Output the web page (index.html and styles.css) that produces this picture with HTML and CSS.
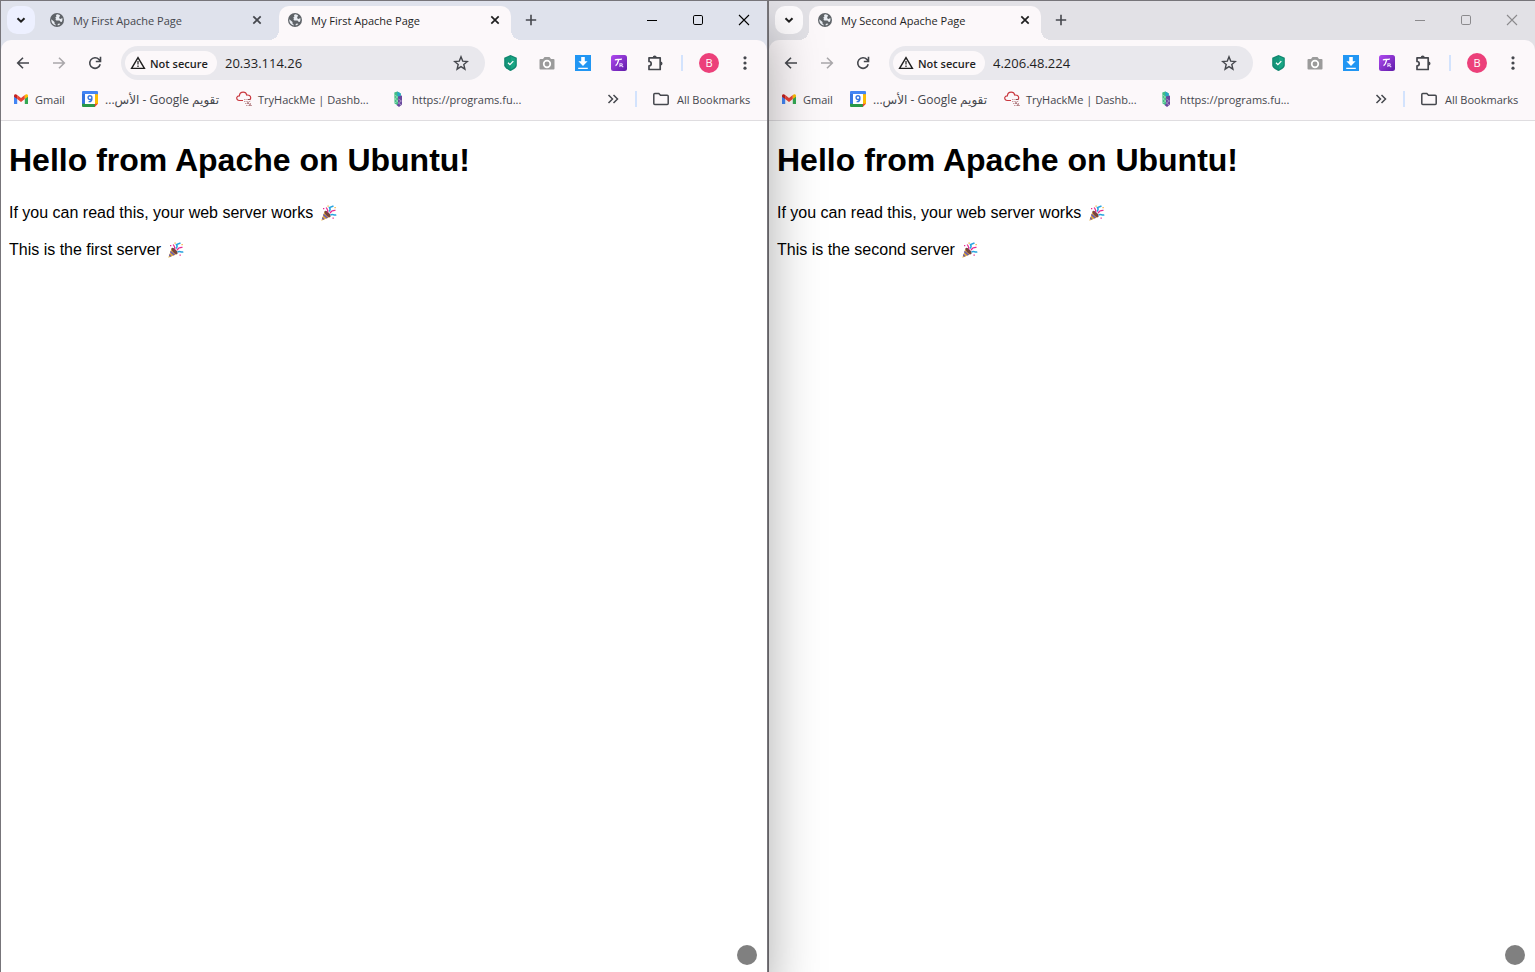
FILE: index.html
```html
<!DOCTYPE html>
<html lang="en">
<head>
<meta charset="utf-8">
<title>Apache servers side by side</title>
<link rel="stylesheet" href="styles.css">
</head>
<body>
<svg class="sprite" aria-hidden="true">
  <defs>
    <linearGradient id="violet" x1="0" y1="0" x2="1" y2="1"><stop offset="0" stop-color="#b04af0"/><stop offset="1" stop-color="#5f1ba8"/></linearGradient>
  </defs>
  <symbol id="chevron" viewBox="0 0 16 16"><path d="M4.500 6.200 8 9.700l3.500-3.500" fill="none" stroke="currentColor" stroke-width="2"/></symbol>
  <symbol id="globe" viewBox="0 0 16 16"><circle cx="8" cy="8" r="7" fill="#5f6368"/><path d="M2.300 7.200 5.500 10v1.600l1.700 1.600c-3 0-5.200-2.600-4.900-6zM8.500 2.300C7 2.500 6.600 4 7.600 4.500 6.200 5.300 6 6 7.200 6.600c-1 .5-.8 1.700.2 1.800h2.800c1 .2 1.200 1.700 2.400 1.700.8-1 1.100-2.600.7-4-.9.800-2.200 1.200-3 .2-.6-.9.500-1.700.8-2.700-.6-.8-1.500-1.200-2.600-1.300zM8.700 13.500c1-.3 2-.8 2.700-1.500-.7-.8-2-.7-2.700.1z" fill="#e9ecf2"/></symbol>
  <symbol id="close" viewBox="0 0 16 16"><path d="m4.300 4.300 7.400 7.400m0-7.400-7.400 7.400" fill="none" stroke="currentColor" stroke-width="1.700"/></symbol>
  <symbol id="plus" viewBox="0 0 16 16"><path d="M8 2.800v10.400M2.800 8h10.400" fill="none" stroke="currentColor" stroke-width="1.600"/></symbol>
  <symbol id="win-min" viewBox="0 0 16 16"><path d="M3 8.500h10" fill="none" stroke="currentColor"/></symbol>
  <symbol id="win-max" viewBox="0 0 16 16"><rect x="3.500" y="3.500" width="9" height="9" rx="1.300" fill="none" stroke="currentColor"/></symbol>
  <symbol id="win-close" viewBox="0 0 16 16"><path d="m3 3 10 10M13 3 3 13" fill="none" stroke="currentColor" stroke-width="1.100"/></symbol>
  <symbol id="back" viewBox="0 0 16 16"><path d="M14 8H3M8 2.700 2.700 8 8 13.300" fill="none" stroke="currentColor" stroke-width="1.600"/></symbol>
  <symbol id="forward" viewBox="0 0 16 16"><path d="M2 8h11M8 2.700 13.300 8 8 13.300" fill="none" stroke="currentColor" stroke-width="1.600"/></symbol>
  <symbol id="reload" viewBox="0 0 16 16"><path d="M13.200 9.300A5.300 5.300 0 1 1 12 4.500l1.300 1.500M13.500 1.800v4.700H8.800" fill="none" stroke="currentColor" stroke-width="1.600"/></symbol>
  <symbol id="warning" viewBox="0 0 16 16"><path d="M8 2.600 1.600 13.400h12.800z" fill="none" stroke="currentColor" stroke-width="1.400"/><path d="M8 6v3.600m0 1v1.300" fill="none" stroke="currentColor" stroke-width="1.200"/></symbol>
  <symbol id="star" viewBox="0 0 16 16"><path d="m8 1.800 1.700 4.300 4.700.4-3.600 3 1.100 4.600L8 11.600l-3.900 2.500 1.100-4.600-3.600-3 4.700-.4z" fill="none" stroke="currentColor" stroke-width="1.400"/></symbol>
  <symbol id="shield" viewBox="0 0 16 16"><path d="m7.500 0 6.300 2.700v7.500c0 2.300-3.200 4.300-6.300 5.800-3.100-1.500-6.300-3.500-6.300-5.800V2.700z" fill="#10866f"/><path d="m7.500 1.300 5 2.200v6.400c0 1.600-2.500 3.300-5 4.600z" fill="#18a583"/><path d="m7.500 1.300-5 2.200v6.400c0 1.600 2.500 3.300 5 4.600z" fill="#14967a"/><path d="m5 7.700 1.900 1.900 3.400-3.500" fill="none" stroke="#fff" stroke-width="1.300"/></symbol>
  <symbol id="camera" viewBox="0 0 16 16"><path d="M1.500 4H4l1.500-2h5L12 4h2.500q1 0 1 1v8.500q0 1-1 1h-13q-1 0-1-1V5q0-1 1-1z" fill="#9b9b9b"/><circle cx="8" cy="9" r="3.300" fill="none" stroke="#fff" stroke-width="1.700"/></symbol>
  <symbol id="download" viewBox="0 0 16 16"><path d="M0 0h16v16H0z" fill="#2196f3"/><path d="M6.200 2h3.600v4.300h2.800L8 11 3.400 6.300h2.800zM3.200 12.700h9.600v1.400H3.200z" fill="#fff"/></symbol>
  <symbol id="tr" viewBox="0 0 16 16"><rect width="16" height="16" rx="2.500" fill="url(#violet)"/><path d="M4 5.300c.5-1.300 2-.8 5.500-1l1.300-.3M7.700 4.700C7 7 6.400 10 4.500 10.700" fill="none" stroke="#fff" stroke-width="1.300"/><path d="M8.900 12V8.700h1.800q1.300 1-.1 1.800H9m1.500.2 1.800 1.400" fill="none" stroke="#e7d2fa" stroke-width="1.100"/></symbol>
  <symbol id="puzzle" viewBox="0 0 18 18"><path d="M3 3.800h11.200V15.500H3v-3.600a2.200 2.200 0 0 0 0-4.400z" fill="none" stroke="currentColor" stroke-width="1.700" stroke-linejoin="round"/><path d="M6.700 3.500a2 2 0 0 1 4 0zM14.500 7.600a2 2 0 0 1 0 4z" fill="currentColor"/></symbol>
  <symbol id="dots" viewBox="0 0 16 16"><g fill="currentColor"><circle cx="8" cy="2.800" r="1.600"/><circle cx="8" cy="8" r="1.600"/><circle cx="8" cy="13.200" r="1.600"/></g></symbol>
  <symbol id="gmail" viewBox="0 0 16 16"><path d="M1 4.500v8.600h3.200V6.900z" fill="#4285f4"/><path d="M15 4.500v8.600h-3.200V6.900z" fill="#34a853"/><path d="M4.200 4 8 6.900 11.800 4v4.100L8 11 4.200 8.100z" fill="#ea4335"/><path d="M11.800 4c1.400-1.300 3.200-.9 3.200.9v.8l-3.200 2.400z" fill="#fbbc04"/><path d="M4.200 4C2.800 2.700 1 3.100 1 4.900v.8l3.200 2.400z" fill="#c5221f"/></symbol>
  <symbol id="calendar" viewBox="0 0 16 16"><path d="M0 1q0-1 1-1h14q1 0 1 1v3H0z" fill="#4285f4"/><path d="M0 3h3v10H0z" fill="#3474e0"/><path d="M12.800 3.200H16V13h-3.200z" fill="#fbbc04"/><path d="M0 12.800h13V16H1q-1 0-1-1z" fill="#299947"/><path d="M12.800 12.800H16L12.800 16z" fill="#ea4335"/><path d="M3 3h10v10H3z" fill="#fff"/><path d="M9.900 6.700a1.900 1.900 0 1 1-3.800-.1 1.900 1.900 0 0 1 3.800 0c.2 2.700-.8 4.400-3.300 4" fill="none" stroke="#3474e0" stroke-width="1.400"/></symbol>
  <symbol id="cloud" viewBox="0 0 16 16"><path d="M7 9.500H3.500C1.300 9.500.2 7.500 1 6c.5-1 1.500-1.300 2.400-1.200C3.600 2.700 5.200 1.200 7.200 1.200c1.900 0 3.200 1.200 3.600 2.900 2-.4 3.900.8 3.900 2.700 0 .8-.3 1.500-.9 2" fill="none" stroke="#c9383f" stroke-width="1.200"/><g fill="none" stroke="#c99a9e" stroke-dasharray="1.500 .8"><path d="M8 8.500h4M8 10.500h7M9 12.500h6M10 14.500h6"/></g><path d="M12 8.500h2M11 12h2m0 2h2" stroke="#8b4b50" fill="none"/></symbol>
  <symbol id="dna" viewBox="0 0 16 16"><path d="m4.300 1.500 3-1 3.300 1.700v5L8 8v6.500l-3.500-2z" fill="#42bd85"/><path d="m7.300.5 3.500 1.900v4.200L7.300 5z" fill="#28a7c5"/><path d="m8 5.500 4-1v9L9 16l-2.500-2 1.500-1z" fill="#68489d"/><path d="m4.500 4 3.200 2-3.200 2 3.500 2-3.200 2" fill="none" stroke="#a4e3c1" stroke-width=".8"/><path d="m8.300 8 3.200 2-3.200 2 3 2" fill="none" stroke="#b7a2ce" stroke-width=".8"/></symbol>
  <symbol id="more" viewBox="0 0 16 16"><path d="m3.500 4 4 4-4 4m5-8 4 4-4 4" fill="none" stroke="currentColor" stroke-width="1.500"/></symbol>
  <symbol id="folder" viewBox="0 0 16 16"><path d="M.8 3.500q0-1 1-1h4L7.500 4.300h6.700q1 0 1 1v7.200q0 1-1 1H1.800q-1 0-1-1z" fill="none" stroke="currentColor" stroke-width="1.500"/></symbol>
  <symbol id="party" viewBox="0 0 16 16"><path d="M4 6.500 9.500 12 .8 15.700z" fill="#e0ac3d"/><path d="m3.200 8.700 4.500 4-1.700.7-3.500-3.200zM2 12l2 2.200-1.400.6-1.200-1.200z" fill="#6a5aad"/><ellipse cx="7" cy="9" rx="1.700" ry="4" transform="rotate(-43 7 9)" fill="#74443e"/><path d="M7 7.300C8 5 6.500 4 5.700 2.500M9.500 8.200c1-2 2.500-3 5.500-2.800" fill="none" stroke="#e62b91" stroke-width="1.300"/><path d="M8.500 6.500C9.500 5.500 10 4 9 2.500L13 1M10 10c2-1.300 3.200.5 5.800 0" fill="none" stroke="#28a4df" stroke-width="1.500"/><path d="M2.500 3h1.300v1.300H2.500zM12 12.500h1.300v1.300H12z" fill="#e62b91"/><path d="M7 .6h1.200v1.200H7zM14 2h1.200v1.200H14z" fill="#f0ae2e"/></symbol>
</svg>

<main class="desktop">
  <section class="window window-front" aria-label="First server">
    <header class="tabstrip">
      <button class="tab-search" aria-label="Search tabs"><svg class="icon"><use href="#chevron"/></svg></button>
      <div class="tab"><svg class="icon"><use href="#globe"/></svg><span class="tab-title">My First Apache Page</span><button class="tab-close" aria-label="Close tab"><svg class="icon"><use href="#close"/></svg></button></div>
      <div class="tab tab-active"><svg class="icon"><use href="#globe"/></svg><span class="tab-title">My First Apache Page</span><button class="tab-close" aria-label="Close tab"><svg class="icon"><use href="#close"/></svg></button></div>
      <button class="new-tab" aria-label="New tab"><svg class="icon"><use href="#plus"/></svg></button>
      <div class="controls">
        <button aria-label="Minimize"><svg class="icon"><use href="#win-min"/></svg></button>
        <button aria-label="Maximize"><svg class="icon"><use href="#win-max"/></svg></button>
        <button aria-label="Close"><svg class="icon"><use href="#win-close"/></svg></button>
      </div>
    </header>
    <div class="chrome">
      <div class="toolbar">
        <button class="tool" aria-label="Back"><svg class="icon"><use href="#back"/></svg></button>
        <button class="tool" aria-label="Forward" disabled><svg class="icon"><use href="#forward"/></svg></button>
        <button class="tool" aria-label="Reload"><svg class="icon"><use href="#reload"/></svg></button>
        <div class="address">
          <button class="security"><svg class="icon"><use href="#warning"/></svg>Not secure</button>
          <input class="url" type="text" aria-label="Address" value="20.33.114.26">
          <button class="tool" aria-label="Bookmark this tab"><svg class="icon"><use href="#star"/></svg></button>
        </div>
        <button class="tool" aria-label="Shield"><svg class="icon"><use href="#shield"/></svg></button>
        <button class="tool" aria-label="Screenshot"><svg class="icon"><use href="#camera"/></svg></button>
        <button class="tool" aria-label="Download"><svg class="icon"><use href="#download"/></svg></button>
        <button class="tool" aria-label="Translate"><svg class="icon"><use href="#tr"/></svg></button>
        <button class="tool" aria-label="Extensions"><svg class="icon icon-large"><use href="#puzzle"/></svg></button>
        <span class="divider"></span>
        <button class="tool" aria-label="Profile"><span class="avatar">B</span></button>
        <button class="tool" aria-label="Menu"><svg class="icon"><use href="#dots"/></svg></button>
      </div>
      <nav class="bookmarks" aria-label="Bookmarks">
        <a href="#"><svg class="icon"><use href="#gmail"/></svg><span class="label-short">Gmail</span></a>
        <a href="#"><svg class="icon"><use href="#calendar"/></svg><span class="label-rtl" dir="rtl">تقويم Google - الأس...</span></a>
        <a href="#"><svg class="icon"><use href="#cloud"/></svg><span class="label-wide">TryHackMe | Dashb...</span></a>
        <a href="#"><svg class="icon"><use href="#dna"/></svg><span class="label-wide">https://programs.fu...</span></a>
        <button class="overflow" aria-label="More bookmarks"><svg class="icon"><use href="#more"/></svg></button>
        <span class="divider"></span>
        <button class="all"><svg class="icon"><use href="#folder"/></svg>All Bookmarks</button>
      </nav>
    </div>
    <article class="page">
      <h1>Hello from Apache on Ubuntu!</h1>
      <p>If you can read this, your web server works <svg class="emoji" role="img" aria-label="Party popper"><use href="#party"/></svg></p>
      <p>This is the first server <svg class="emoji" role="img" aria-label="Party popper"><use href="#party"/></svg></p>
    </article>
    <span class="dot"></span>
  </section>

  <section class="window window-back" aria-label="Second server">
    <header class="tabstrip">
      <button class="tab-search" aria-label="Search tabs"><svg class="icon"><use href="#chevron"/></svg></button>
      <div class="tab tab-active"><svg class="icon"><use href="#globe"/></svg><span class="tab-title">My Second Apache Page</span><button class="tab-close" aria-label="Close tab"><svg class="icon"><use href="#close"/></svg></button></div>
      <button class="new-tab" aria-label="New tab"><svg class="icon"><use href="#plus"/></svg></button>
      <div class="controls">
        <button aria-label="Minimize"><svg class="icon"><use href="#win-min"/></svg></button>
        <button aria-label="Maximize"><svg class="icon"><use href="#win-max"/></svg></button>
        <button aria-label="Close"><svg class="icon"><use href="#win-close"/></svg></button>
      </div>
    </header>
    <div class="chrome">
      <div class="toolbar">
        <button class="tool" aria-label="Back"><svg class="icon"><use href="#back"/></svg></button>
        <button class="tool" aria-label="Forward" disabled><svg class="icon"><use href="#forward"/></svg></button>
        <button class="tool" aria-label="Reload"><svg class="icon"><use href="#reload"/></svg></button>
        <div class="address">
          <button class="security"><svg class="icon"><use href="#warning"/></svg>Not secure</button>
          <input class="url" type="text" aria-label="Address" value="4.206.48.224">
          <button class="tool" aria-label="Bookmark this tab"><svg class="icon"><use href="#star"/></svg></button>
        </div>
        <button class="tool" aria-label="Shield"><svg class="icon"><use href="#shield"/></svg></button>
        <button class="tool" aria-label="Screenshot"><svg class="icon"><use href="#camera"/></svg></button>
        <button class="tool" aria-label="Download"><svg class="icon"><use href="#download"/></svg></button>
        <button class="tool" aria-label="Translate"><svg class="icon"><use href="#tr"/></svg></button>
        <button class="tool" aria-label="Extensions"><svg class="icon icon-large"><use href="#puzzle"/></svg></button>
        <span class="divider"></span>
        <button class="tool" aria-label="Profile"><span class="avatar">B</span></button>
        <button class="tool" aria-label="Menu"><svg class="icon"><use href="#dots"/></svg></button>
      </div>
      <nav class="bookmarks" aria-label="Bookmarks">
        <a href="#"><svg class="icon"><use href="#gmail"/></svg><span class="label-short">Gmail</span></a>
        <a href="#"><svg class="icon"><use href="#calendar"/></svg><span class="label-rtl" dir="rtl">تقويم Google - الأس...</span></a>
        <a href="#"><svg class="icon"><use href="#cloud"/></svg><span class="label-wide">TryHackMe | Dashb...</span></a>
        <a href="#"><svg class="icon"><use href="#dna"/></svg><span class="label-wide">https://programs.fu...</span></a>
        <button class="overflow" aria-label="More bookmarks"><svg class="icon"><use href="#more"/></svg></button>
        <span class="divider"></span>
        <button class="all"><svg class="icon"><use href="#folder"/></svg>All Bookmarks</button>
      </nav>
    </div>
    <article class="page">
      <h1>Hello from Apache on Ubuntu!</h1>
      <p>If you can read this, your web server works <svg class="emoji" role="img" aria-label="Party popper"><use href="#party"/></svg></p>
      <p>This is the second server <svg class="emoji" role="img" aria-label="Party popper"><use href="#party"/></svg></p>
    </article>
    <span class="dot"></span>
  </section>
</main>
</body>
</html>
```

FILE: styles.css
```css
* { box-sizing: border-box; }

body {
  margin: 0;
  overflow: hidden;
  background: #fff;
  color: #1f1f1f;
  font-family: "Open Sans", "DejaVu Sans", sans-serif;
  font-size: 11px;
}

button {
  display: flex;
  align-items: center;
  justify-content: center;
  padding: 0;
  border: 0;
  background: none;
  color: inherit;
  font: inherit;
}

.sprite { position: absolute; width: 0; height: 0; }
.icon { width: 16px; height: 16px; flex: none; }
.icon-large { width: 18px; height: 18px; }

.desktop {
  display: grid;
  grid-template-columns: 1fr 1fr;
  min-height: 100vh;
  margin-right: -1px;
}

.window {
  position: relative;
  display: flex;
  flex-direction: column;
  min-width: 0;
  border: 1px solid #77757a;
  border-bottom: 0;
  background: #fff;
}
.window-front {
  --strip: #dfe2ec;
  --search: #edf0ff;
  --control: #000;
  z-index: 1;
  box-shadow: 0 30px 50px rgba(0, 0, 0, .34);
}
.window-back {
  --strip: #e2e1e6;
  --search: #fdfbfd;
  --control: #8b8a8d;
}

/* Tab strip */
.tabstrip {
  display: flex;
  align-items: center;
  height: 39px;
  padding: 0 0 1px 6px;
  background: var(--strip);
}
.tab-search {
  width: 28px;
  height: 28px;
  margin-right: 6px;
  border-radius: 10px;
  background: var(--search);
}
.tab {
  position: relative;
  display: flex;
  align-items: center;
  align-self: flex-end;
  gap: 8px;
  width: 232px;
  height: 34px;
  margin: 0 6px -1px 0;
  padding: 0 8px 6px;
  color: #45474d;
}
.tab-title { flex: 1; white-space: nowrap; }
.tab-active {
  margin-right: 0;
  border-radius: 10px 10px 0 0;
  background: #fcf8fa;
  color: #1f1f1f;
}
.tab-active::before,
.tab-active::after {
  content: "";
  position: absolute;
  bottom: 0;
  width: 10px;
  height: 10px;
}
.tab-active::before {
  right: 100%;
  background: radial-gradient(circle at 0 0, transparent 10px, #fcf8fa 10px);
}
.tab-active::after {
  left: 100%;
  background: radial-gradient(circle at 100% 0, transparent 10px, #fcf8fa 10px);
}
.new-tab { width: 28px; height: 28px; margin-left: 6px; color: #45474d; }
.controls { display: flex; margin-left: auto; color: var(--control); }
.controls button { width: 46px; height: 38px; }

/* Toolbar and bookmarks */
.chrome {
  border-bottom: 1px solid #dfdde0;
  background: linear-gradient(#fcf8fa, #fcf8fa) 0 10px no-repeat, var(--strip);
  color: #45474d;
}
.toolbar {
  display: flex;
  align-items: center;
  height: 46px;
  padding: 0 4px;
  border-radius: 10px 10px 0 0;
  background: #fcf8fa;
}
.tool { width: 36px; height: 34px; flex: none; }
.tool:disabled { color: #a9a7aa; }
.address {
  display: flex;
  flex: 1;
  align-items: center;
  min-width: 0;
  height: 34px;
  margin: 0 8px;
  padding: 0 6px 0 4px;
  border-radius: 17px;
  background: #e9e8ed;
}
.security {
  justify-content: flex-start;
  gap: 4px;
  flex: none;
  width: 92px;
  height: 24px;
  padding: 0 5px;
  border-radius: 12px;
  background: #fcf8fa;
  color: #1f1f1f;
  font-weight: 600;
}
.url {
  flex: 1;
  min-width: 0;
  padding: 0 8px;
  border: 0;
  outline: 0;
  background: none;
  color: #1f1f1f;
  font: 13px "Open Sans", sans-serif;
}
.divider { width: 2px; height: 16px; margin: 0 8px; flex: none; background: #d3e3fd; }
.avatar {
  width: 20px;
  height: 20px;
  border-radius: 50%;
  background: #ec407a;
  color: #fff;
  font-size: 11px;
  line-height: 20px;
}
.bookmarks {
  display: flex;
  align-items: center;
  height: 34px;
  padding: 0 14px 8px 12px;
  white-space: nowrap;
}
.bookmarks a {
  display: flex;
  align-items: center;
  gap: 6px;
  margin-right: 16px;
  color: inherit;
  text-decoration: none;
}
.label-short { width: 31px; }
.label-wide { width: 116px; }
.label-rtl { width: 116px; padding-right: 1px; font-size: 12px; line-height: 15px; }
.overflow { width: 28px; height: 26px; margin-left: auto; }
.bookmarks .divider { margin-right: 16px; }
.all { gap: 8px; min-width: 100px; justify-content: flex-start; }

/* Served page */
.page {
  flex: 1;
  padding: 0 8px;
  color: #000;
  font: 16px/21px "Liberation Sans", Arial, sans-serif;
}
.page h1 { margin: 21px 0 23px; font-size: 32px; line-height: 37px; }
.page p { margin: 0 0 16px; }
.emoji { width: 17px; height: 16px; margin-left: 2px; vertical-align: -3px; }
.dot {
  position: absolute;
  right: 10px;
  bottom: 7px;
  width: 20px;
  height: 20px;
  border-radius: 50%;
  background: #808080;
}
```
